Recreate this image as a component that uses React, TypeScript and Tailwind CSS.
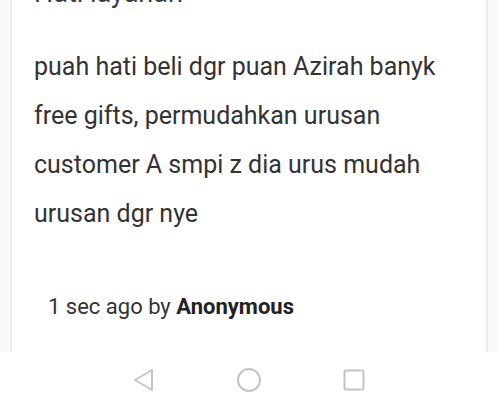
export default function App() {
  return (
    <div className="w-[498px] h-[409px] bg-[#fafafa] overflow-hidden flex flex-col" style={{ fontFamily: 'Roboto, sans-serif' }}>
      <div className="h-[352px] px-[10px] shrink-0">
        <div className="h-full bg-white border-x-2 border-[#ececec] pl-[22px] pr-2 overflow-hidden">
          <h2 className="text-[27px] leading-[30px] text-[#3a3a3a] mt-[-22px] whitespace-nowrap">
            Hati layanan
          </h2>
          <p className="mt-[34px] text-[25px] leading-[49px] text-[#333] whitespace-nowrap">
            puah hati beli dgr puan Azirah banyk
            <br />
            free gifts, permudahkan urusan
            <br />
            customer A smpi z dia urus mudah
            <br />
            urusan dgr nye
          </p>
          <p className="mt-[52px] pl-[14px] text-[22px] text-[#333]">
            1 sec ago by <span className="font-bold text-[#222]">Anonymous</span>
          </p>
        </div>
      </div>
      <div className="flex-1 bg-white flex items-center justify-center gap-[80px] pb-[2px]">
        <svg width="24" height="24" viewBox="0 0 24 24" fill="none" stroke="#c4c4c4" strokeWidth="2" strokeLinejoin="round">
          <path d="M20 2 L3 12 L20 22 Z" />
        </svg>
        <svg width="26" height="26" viewBox="0 0 26 26" fill="none" stroke="#c4c4c4" strokeWidth="2">
          <circle cx="13" cy="13" r="11" />
        </svg>
        <svg width="24" height="24" viewBox="0 0 24 24" fill="none" stroke="#c4c4c4" strokeWidth="2">
          <rect x="2.5" y="2.5" width="19" height="19" rx="1" />
        </svg>
      </div>
    </div>
  )
}
